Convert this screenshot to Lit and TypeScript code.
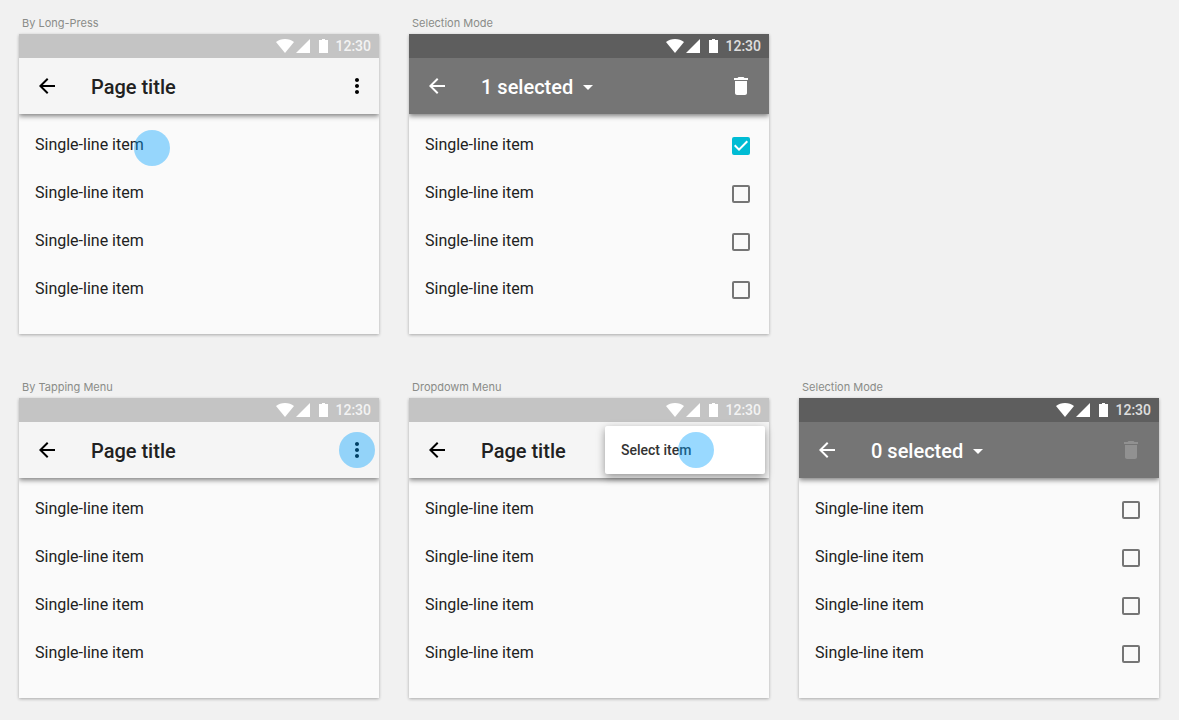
import { LitElement, html, css, svg, nothing } from "lit";
import { customElement, property, state } from "lit/decorators.js";

type Mode = "press" | "tap" | "menu" | "select";

interface Screen {
  caption: string;
  mode: Mode;
  checked?: number[];
}

const ROWS: Screen[][] = [
  [
    { caption: "By Long-Press", mode: "press" },
    { caption: "Selection Mode", mode: "select", checked: [0] },
  ],
  [
    { caption: "By Tapping Menu", mode: "tap" },
    { caption: "Dropdowm Menu", mode: "menu" },
    { caption: "Selection Mode", mode: "select", checked: [] },
  ],
];

const ITEMS = ["Single-line item", "Single-line item", "Single-line item", "Single-line item"];

const icon = (d: string) => html`
  <svg class="icon" viewBox="0 0 24 24" aria-hidden="true">${svg`<path d=${d}></path>`}</svg>
`;

const BACK = "M20 11H7.83l5.59-5.59L12 4l-8 8 8 8 1.41-1.41L7.83 13H20v-2z";
const MORE =
  "M12 8c1.1 0 2-.9 2-2s-.9-2-2-2-2 .9-2 2 .9 2 2 2zm0 2c-1.1 0-2 .9-2 2s.9 2 2 2 2-.9 2-2-.9-2-2-2zm0 6c-1.1 0-2 .9-2 2s.9 2 2 2 2-.9 2-2-.9-2-2-2z";
const TRASH = "M6 19c0 1.1.9 2 2 2h8c1.1 0 2-.9 2-2V7H6v12zM19 4h-3.5l-1-1h-5l-1 1H5v2h14V4z";
const CARET = "M7 10l5 5 5-5z";

@customElement("phone-screen")
export class PhoneScreen extends LitElement {
  @property() mode: Mode = "press";
  @property({ attribute: false }) initial: number[] = [];
  @state() private picked = new Set<number>();

  static styles = css`
    :host {
      display: block;
      font-family: Roboto, sans-serif;
    }
    .screen {
      position: relative;
      background: #fafafa;
      color: #212121;
      box-shadow: 0 1px 3px rgba(0, 0, 0, 0.3);
    }
    .status {
      display: flex;
      align-items: center;
      justify-content: flex-end;
      gap: 7px;
      height: 24px;
      padding-right: 8px;
      background: #c4c4c4;
      color: #fff;
      font-size: 14px;
      font-weight: 500;
      line-height: 24px;
    }
    .signals {
      width: 52px;
      height: 14px;
      fill: #fff;
    }
    .time {
      opacity: 0.8;
    }
    .bar {
      position: relative;
      display: flex;
      align-items: center;
      height: 56px;
      padding: 0 16px;
      box-sizing: border-box;
      background: #f5f5f5;
      color: #212121;
      box-shadow: 0 2px 5px rgba(0, 0, 0, 0.5);
      clip-path: inset(0 0 -8px);
    }
    .bar.page {
      padding-right: 10px;
    }
    .selecting .status {
      background: #5e5e5e;
    }
    .selecting .bar {
      background: #757575;
      color: #fff;
    }
    button {
      display: flex;
      align-items: center;
      margin: 0;
      padding: 0;
      border: 0;
      background: none;
      color: inherit;
      font: inherit;
      cursor: pointer;
    }
    .tool {
      position: relative;
      color: #000;
    }
    .selecting .tool {
      color: #fff;
    }
    .selecting .tool:disabled {
      color: #919191;
      cursor: default;
    }
    .icon {
      display: block;
      width: 24px;
      height: 24px;
      fill: currentColor;
    }
    .title {
      flex: 1;
      margin: 0 0 0 32px;
      padding-top: 2px;
      font-size: 20px;
      font-weight: 500;
      line-height: 24px;
    }
    .count {
      gap: 3px;
    }
    .list {
      margin: 0;
      padding: 8px 16px 20px;
      list-style: none;
    }
    .item {
      position: relative;
      display: flex;
      align-items: center;
      height: 48px;
      font-size: 16px;
    }
    .label {
      flex: 1;
      padding-bottom: 3px;
      line-height: 24px;
    }
    .check {
      display: grid;
      margin-right: 3px;
    }
    .box,
    .tick {
      grid-area: 1 / 1;
      width: 18px;
      height: 18px;
    }
    .box {
      appearance: none;
      box-sizing: border-box;
      margin: 0;
      border: 2px solid #757575;
      border-radius: 2px;
      cursor: pointer;
    }
    .box:checked {
      border-color: #00bcd4;
      background: #00bcd4;
    }
    .tick {
      fill: #fff;
      pointer-events: none;
      visibility: hidden;
    }
    .box:checked + .tick {
      visibility: visible;
    }
    .menu {
      position: absolute;
      top: 28px;
      right: 4px;
      width: 160px;
      border-radius: 2px;
      background: #fff;
      box-shadow: 0 3px 8px rgba(0, 0, 0, 0.4);
    }
    .option {
      width: 100%;
      height: 48px;
      padding: 0 16px;
      color: #333;
      font-size: 14px;
      font-weight: 500;
    }
    .touch {
      position: absolute;
      width: 36px;
      height: 36px;
      border-radius: 50%;
      background: rgba(0, 160, 255, 0.4);
      pointer-events: none;
    }
    .on-item {
      left: 99px;
      top: 8px;
    }
    .on-tool {
      left: -6px;
      top: -6px;
    }
    .on-option {
      left: 73px;
      top: 6px;
    }
  `;

  willUpdate(changed: Map<string, unknown>) {
    if (changed.has("initial")) this.picked = new Set(this.initial);
  }

  private toggle(index: number) {
    const next = new Set(this.picked);
    if (!next.delete(index)) next.add(index);
    this.picked = next;
  }

  private renderBar(selecting: boolean) {
    if (selecting) {
      return html`
        <header class="bar">
          <button class="tool" aria-label="Back">${icon(BACK)}</button>
          <h2 class="title">
            <button class="count" aria-haspopup="menu">${this.picked.size} selected${icon(CARET)}</button>
          </h2>
          <button class="tool" aria-label="Delete" ?disabled=${this.picked.size === 0}>${icon(TRASH)}</button>
        </header>
      `;
    }
    return html`
      <header class="bar page">
        <button class="tool" aria-label="Back">${icon(BACK)}</button>
        <h2 class="title">Page title</h2>
        ${this.mode === "menu"
          ? nothing
          : html`<button class="tool" aria-label="More options">
              ${icon(MORE)}${this.mode === "tap" ? html`<span class="touch on-tool"></span>` : nothing}
            </button>`}
      </header>
    `;
  }

  render() {
    const selecting = this.mode === "select";
    return html`
      <div class="screen ${selecting ? "selecting" : ""}">
        <div class="status">
          <svg class="signals" viewBox="0 0 52 14" aria-hidden="true">
            <path d="M9 14 0 3C2.400 1.100 5.500 0 9 0s6.600 1.100 9 3z"></path>
            <path d="M34 0v14H20z"></path>
            <path d="M43 1h3V0h3v1h3v13h-9z"></path>
          </svg>
          <span class="time">12:30</span>
        </div>
        ${this.renderBar(selecting)}
        <ul class="list">
          ${ITEMS.map(
            (text, i) => html`
              <li class="item">
                ${selecting
                  ? html`<label class="label" for="item-${i}">${text}</label>
                      <span class="check">
                        <input
                          class="box"
                          type="checkbox"
                          id="item-${i}"
                          .checked=${this.picked.has(i)}
                          @change=${() => this.toggle(i)}
                        />
                        <svg class="tick" viewBox="3 3 18 18" aria-hidden="true">
                          <path d="M10 17l-5-5 1.410-1.410L10 14.170l7.590-7.590L19 8z"></path>
                        </svg>
                      </span>`
                  : html`<span class="label">${text}</span>`}
                ${this.mode === "press" && i === 0 ? html`<span class="touch on-item"></span>` : nothing}
              </li>
            `
          )}
        </ul>
        ${this.mode === "menu"
          ? html`<div class="menu" role="menu">
              <button class="option" role="menuitem">Select item</button>
              <span class="touch on-option"></span>
            </div>`
          : nothing}
      </div>
    `;
  }
}

@customElement("app-root")
export class AppRoot extends LitElement {
  static styles = css`
    :host {
      display: block;
      min-height: 100vh;
      box-sizing: border-box;
      padding: 16px 20px 22px 19px;
      background: #f1f1f1;
    }
    .board {
      display: grid;
      gap: 46px;
    }
    .row {
      display: grid;
      grid-template-columns: repeat(3, 1fr);
      gap: 30px;
    }
    .figure {
      margin: 0;
    }
    .caption {
      margin: 0 0 4px 3px;
      color: #8a8c88;
      font-family: Inter, sans-serif;
      font-size: 11px;
      line-height: 14px;
    }
  `;

  render() {
    return html`
      <main class="board">
        ${ROWS.map(
          (row) => html`
            <section class="row">
              ${row.map(
                (s) => html`
                  <figure class="figure">
                    <figcaption class="caption">${s.caption}</figcaption>
                    <phone-screen .mode=${s.mode} .initial=${s.checked ?? []}></phone-screen>
                  </figure>
                `
              )}
            </section>
          `
        )}
      </main>
    `;
  }
}
